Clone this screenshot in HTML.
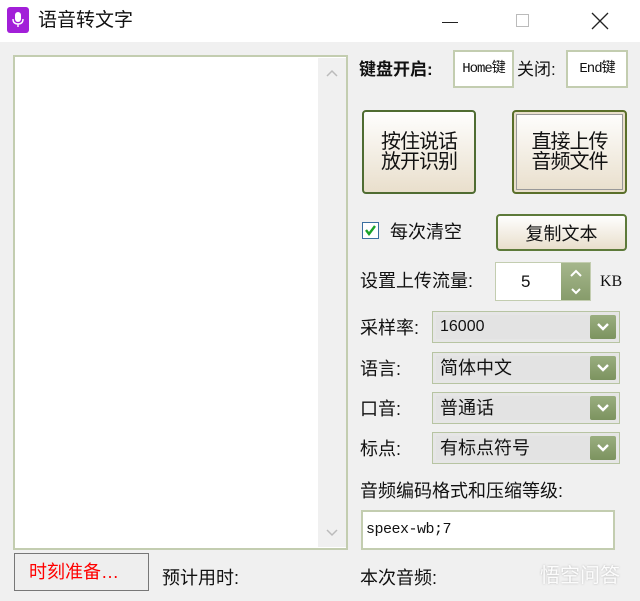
<!DOCTYPE html>
<html><head><meta charset="utf-8"><style>
*{margin:0;padding:0;box-sizing:border-box}
body{width:640px;height:601px;background:#f0f0f0;position:relative;overflow:hidden;font-family:"Liberation Sans","Noto Sans CJK SC","WenQuanYi Zen Hei",sans-serif;color:#111}
.a{position:absolute}
.t{position:absolute;font-size:17px;line-height:20px;white-space:nowrap}
.btn{position:absolute;border:2px solid #5d7a3a;border-radius:4px;background:linear-gradient(#fefefe,#e9dfcc);display:flex;align-items:center;justify-content:center;text-align:center}
.combo{position:absolute;border:1px solid #b7c4a2;background:#e6e6e6;height:32px;left:432px;width:188px;padding:3px}
.combo .in{background:#e3e3e3;height:24px;font-size:18px;line-height:24px;padding-left:4px}
.dd{position:absolute;right:3px;top:3px;width:26px;height:24px;background:linear-gradient(#9aae80,#7c935f);border-radius:2px}
.dd svg{position:absolute;left:7px;top:7px}
.mono{font-family:"Liberation Mono","Noto Sans CJK SC",monospace}
</style></head><body>
<div class="a" style="left:0;top:0;width:640px;height:42px;background:#fff"></div>
<div class="a" style="left:7px;top:7px;width:22px;height:26px;background:#a21fd8;border-radius:3px"></div>
<svg class="a" style="left:11px;top:11px" width="14" height="18"><rect x="4" y="1" width="6" height="10" rx="3" fill="#fff"/><path d="M2 8q0 5 5 5q5 0 5-5M7 13v3" stroke="#fff" fill="none" stroke-width="1.4"/></svg>
<div class="t" style="left:38px;top:9px;font-size:19px;line-height:24px">语音转文字</div>
<div class="a" style="left:442px;top:22px;width:16px;height:1px;background:#222"></div>
<div class="a" style="left:516px;top:14px;width:13px;height:13px;border:1px solid #bbb"></div>
<svg class="a" style="left:591px;top:12px" width="18" height="18"><path d="M1 1L17 17M17 1L1 17" stroke="#222" stroke-width="1.3"/></svg>

<div class="a" style="left:13px;top:55px;width:335px;height:495px;border:2px solid #c3cdb0;background:#fff"></div>
<div class="a" style="left:318px;top:58px;width:28px;height:489px;background:#f0f0f0"></div>
<svg class="a" style="left:325px;top:68px" width="14" height="10"><path d="M2 8L7 3L12 8" stroke="#bbb" fill="none" stroke-width="1.5"/></svg>
<svg class="a" style="left:325px;top:528px" width="14" height="10"><path d="M2 2L7 7L12 2" stroke="#bbb" fill="none" stroke-width="1.5"/></svg>

<div class="t" style="left:359px;top:60px;font-weight:bold">键盘开启:</div>
<div class="a mono" style="left:453px;top:50px;width:61px;height:38px;border:2px solid #c3cdb0;background:#fff;font-size:14px;line-height:34px;text-align:center;letter-spacing:-1px">Home键</div>
<div class="t" style="left:517px;top:60px">关闭:</div>
<div class="a mono" style="left:566px;top:50px;width:62px;height:38px;border:2px solid #c3cdb0;background:#fff;font-size:14px;line-height:34px;text-align:center;letter-spacing:-1px">End键</div>

<div class="btn" style="left:362px;top:110px;width:114px;height:84px;font-size:20px;line-height:20px;letter-spacing:-1px;border-color:#4f6c32">按住说话<br>放开识别</div>
<div class="btn" style="left:512px;top:110px;width:115px;height:84px;font-size:20px;line-height:20px;letter-spacing:-1px;border-color:#5a6f2a;box-shadow:inset 0 0 0 2px #e9dfcc,inset 0 0 0 3px #999">直接上传<br>音频文件</div>

<div class="a" style="left:362px;top:222px;width:17px;height:17px;border:1px solid #3a6fa0;background:#fff"></div>
<svg class="a" style="left:364px;top:224px" width="13" height="13"><path d="M2 6L5 10L11 2" stroke="#1aa32a" fill="none" stroke-width="2.4"/></svg>
<div class="t" style="left:390px;top:222px;font-size:18px">每次清空</div>
<div class="btn" style="left:496px;top:214px;width:131px;height:37px;font-size:18px">复制文本</div>

<div class="t" style="left:360px;top:271px;font-size:18px">设置上传流量:</div>
<div class="a" style="left:495px;top:262px;width:96px;height:39px;border:1px solid #c3cdb0;background:#fff;font-size:17px;line-height:37px;padding-left:25px">5</div>
<div class="a" style="left:561px;top:263px;width:29px;height:37px;background:linear-gradient(#a5b68c,#879c6b)"></div>
<svg class="a" style="left:568px;top:266px" width="16" height="32"><path d="M3 10L8 5L13 10" stroke="#fff" fill="none" stroke-width="2"/><path d="M4 23L8 27L12 23" stroke="#fff" fill="none" stroke-width="2"/></svg>
<div class="t" style="left:600px;top:272px;font-family:'Liberation Serif',serif;font-size:16px">KB</div>

<div class="t" style="left:360px;top:318px;font-size:18px">采样率:</div>
<div class="combo" style="top:311px"><div class="in" style="font-size:16px">16000</div><div class="dd"><svg width="12" height="10"><path d="M1 2L6 7L11 2" stroke="#fff" fill="none" stroke-width="2.4"/></svg></div></div>
<div class="t" style="left:360px;top:359px;font-size:18px">语言:</div>
<div class="combo" style="top:352px"><div class="in">简体中文</div><div class="dd"><svg width="12" height="10"><path d="M1 2L6 7L11 2" stroke="#fff" fill="none" stroke-width="2.4"/></svg></div></div>
<div class="t" style="left:360px;top:399px;font-size:18px">口音:</div>
<div class="combo" style="top:392px"><div class="in">普通话</div><div class="dd"><svg width="12" height="10"><path d="M1 2L6 7L11 2" stroke="#fff" fill="none" stroke-width="2.4"/></svg></div></div>
<div class="t" style="left:360px;top:439px;font-size:18px">标点:</div>
<div class="combo" style="top:432px"><div class="in">有标点符号</div><div class="dd"><svg width="12" height="10"><path d="M1 2L6 7L11 2" stroke="#fff" fill="none" stroke-width="2.4"/></svg></div></div>

<div class="t" style="left:360px;top:481px;font-size:18px">音频编码格式和压缩等级:</div>
<div class="a mono" style="left:361px;top:510px;width:254px;height:40px;border:2px solid #c3cdb0;background:#fff;font-size:15px;line-height:36px;padding-left:3px;letter-spacing:-0.5px">speex-wb;7</div>

<div class="a" style="left:14px;top:553px;width:135px;height:38px;border:1px solid #777;background:#eee;color:#f00;font-size:18px;line-height:36px;padding-left:14px">时刻准备…</div>
<div class="t" style="left:162px;top:568px;font-size:18px">预计用时:</div>
<div class="t" style="left:360px;top:568px;font-size:18px">本次音频:</div>
<div class="t" style="left:540px;top:566px;font-size:20px;color:#fff;opacity:.85;text-shadow:0 0 2px #aaa">悟空问答</div>
</body></html>
